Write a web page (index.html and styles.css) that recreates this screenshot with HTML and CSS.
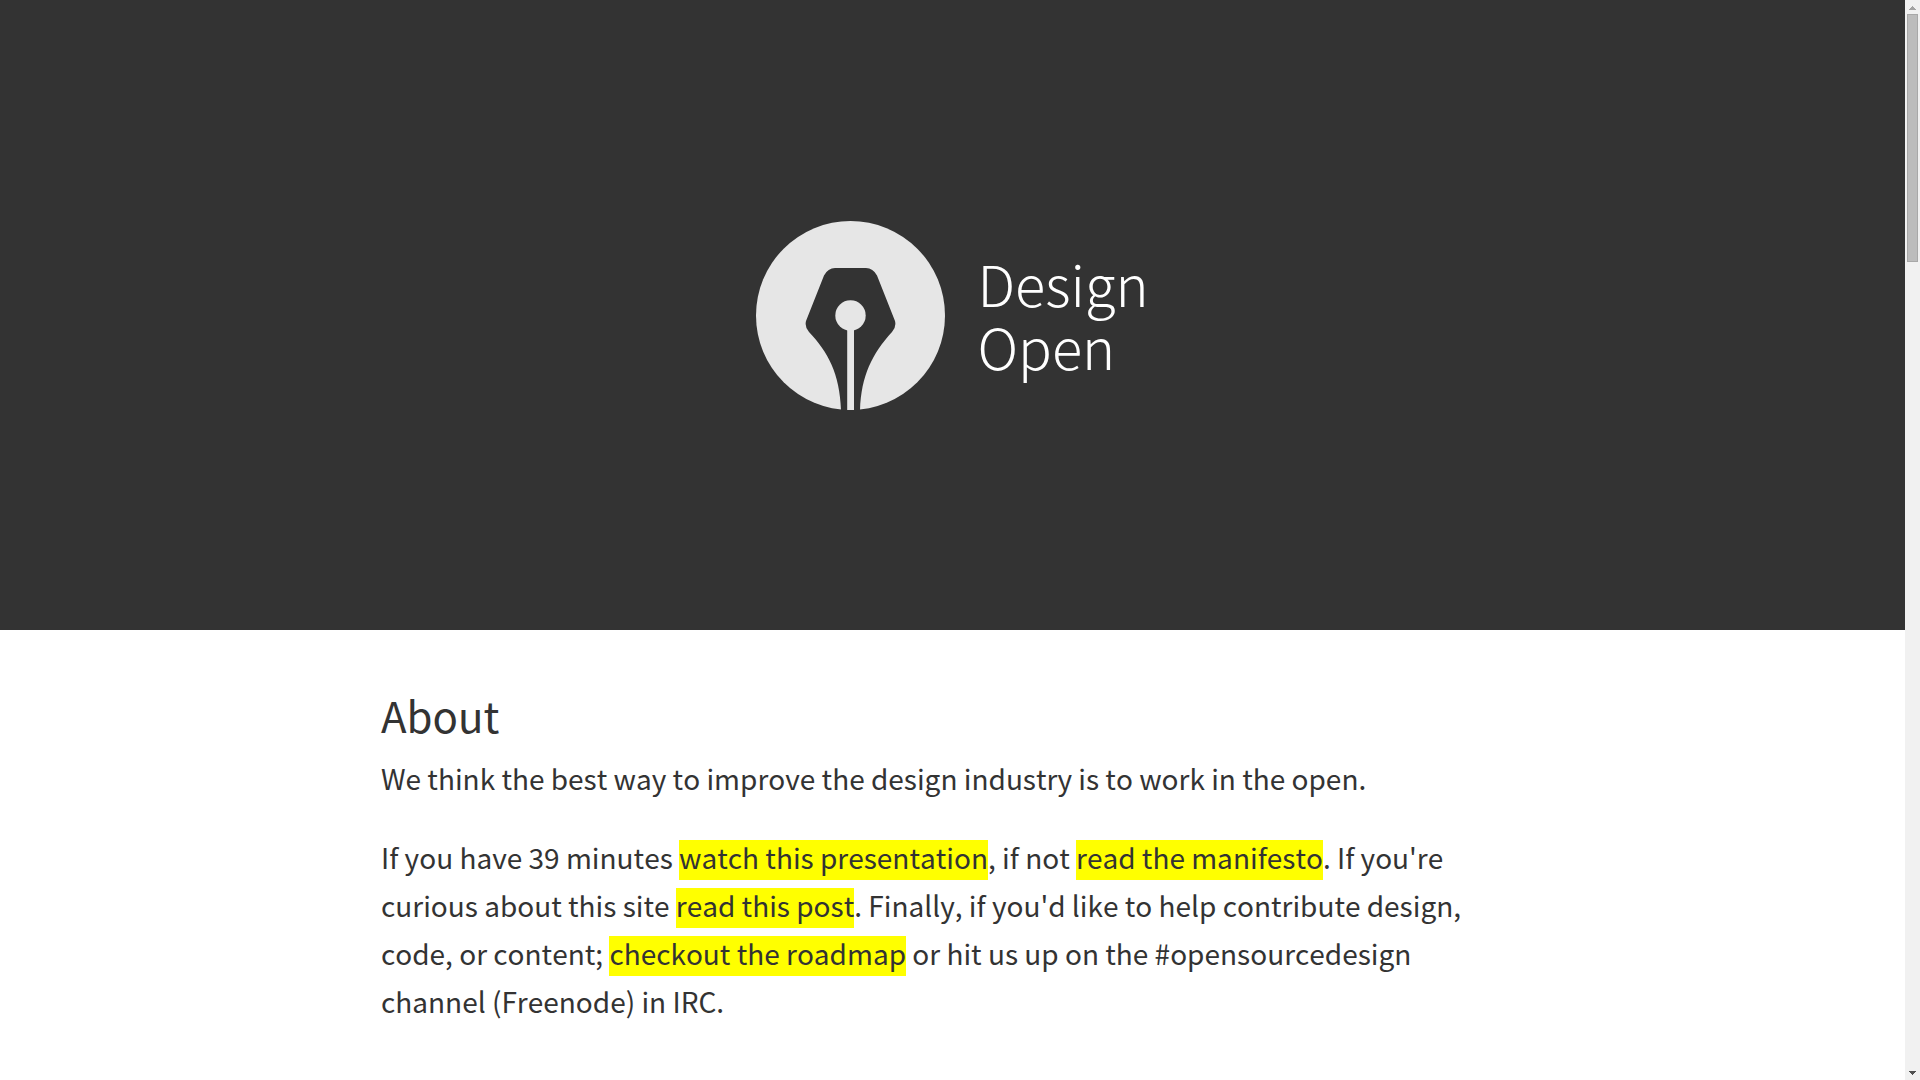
FILE: index.html
```html
<!DOCTYPE html>
<html lang="en">
<head>
<meta charset="utf-8">
<meta name="viewport" content="width=device-width, initial-scale=1">
<title>Design Open</title>
<link rel="stylesheet" href="styles.css">
</head>
<body>
<div class="page">
<header class="hero">
<a class="brand" href="#about">
<svg class="mark" viewBox="0 0 189 189" aria-hidden="true">
<circle cx="94.5" cy="94.5" r="94.5" fill="#e6e6e6"/>
<path d="M79 47H110Q117 47 121 54.500L139 100Q140.500 106 136 111C116 133 105 155 104 190H85C84 153 72 131 53 111Q48.500 106 50 100L68 54.500Q72 47 79 47Z" fill="#333"/>
<circle cx="94.500" cy="94.500" r="15.200" fill="#e6e6e6"/>
<path d="M91.200 105H98V189H91.200Z" fill="#e6e6e6"/>
</svg>
<span class="name">Design<br>Open</span>
</a>
</header>
<main class="content" id="about">
<h1>About</h1>
<p>We think the best way to improve the design industry is to work in the open.</p>
<p>If you have 39 minutes <a href="#presentation">watch this presentation</a>, if not <a href="#manifesto">read the manifesto</a>. If you're curious about this site <a href="#post">read this post</a>. Finally, if you'd like to help contribute design, code, or content; <a href="#roadmap">checkout the roadmap</a> or hit us up on the #opensourcedesign channel (Freenode) in IRC.</p>
</main>
</div>
<div class="scrollbar" aria-hidden="true">
<svg class="arrow" viewBox="0 0 15 14" shape-rendering="crispEdges"><path d="M7 6h1v1h1v1h1v1h1v1H4V9h1V8h1V7h1Z" fill="#a3a3a3"/></svg>
<div class="track"><div class="thumb"></div></div>
<svg class="arrow" viewBox="0 0 15 14" shape-rendering="crispEdges"><path d="M4 5h7v1h-1v1H9v1H8v1H7V8H6V7H5V6H4Z" fill="#505050"/></svg>
</div>
</body>
</html>
```

FILE: styles.css
```css
body {
  margin: 0;
  display: flex;
  min-height: 100vh;
  background: #fff;
  color: #333;
  font: 28px/48px "Noto Sans CJK SC", sans-serif;
  font-kerning: none;
}

.page { flex: 1; min-width: 0; }

.hero {
  display: flex;
  align-items: center;
  justify-content: center;
  min-height: 630px;
  background: #333;
}

.brand {
  display: flex;
  align-items: center;
  gap: 32px;
  color: #fff;
  text-decoration: none;
}

.mark { width: 189px; height: 189px; }

.name { padding-bottom: 2px; font-size: 56px; line-height: 63px; font-weight: 300; }

.content { max-width: 1120px; padding: 53px 20% 0; }

h1 { margin: 0 0 7px; font-size: 42px; line-height: 64px; font-weight: 400; }

p { margin: 0 0 31px; }

.content a {
  padding-bottom: 3px;
  background: linear-gradient(transparent 3px, #ff0 3px);
  color: #333;
  text-decoration: none;
}

.scrollbar {
  position: sticky;
  top: 0;
  display: flex;
  flex-direction: column;
  width: 15px;
  height: 100vh;
  background: #f1f1f1;
}

.arrow { display: block; width: 15px; height: 14px; }

.track { flex: 1; padding: 0 2px; }

.thumb {
  box-sizing: border-box;
  height: 248px;
  border: 1px solid #a8a8a8;
  background: #bcbcbc;
}
```
